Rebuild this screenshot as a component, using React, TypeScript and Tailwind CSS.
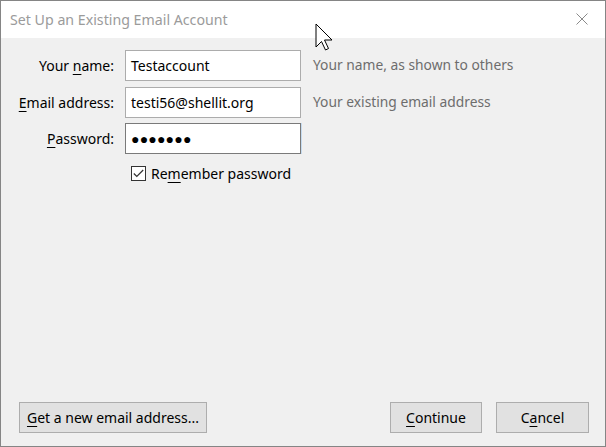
import React from "react"

const font = { fontFamily: '"Noto Sans", "Open Sans", sans-serif' }

function U({ children }: { children: React.ReactNode }) {
  return <span className="underline underline-offset-[3px] decoration-1">{children}</span>
}

interface FieldRowProps {
  label: React.ReactNode
  value: React.ReactNode
  hint?: string
  focused?: boolean
  className?: string
}

function FieldRow({ label, value, hint, focused = false, className = "" }: FieldRowProps) {
  return (
    <div className={`flex items-center h-[31px] ${className}`}>
      <div className="w-[113px] text-right text-[14px] text-black">{label}</div>
      <div
        className={`ml-[11px] w-[176px] h-[31px] flex items-center px-[5px] bg-white border text-[14px] text-black ${
          focused ? "border-[#7a7a7a] shadow-[1px_0_0_#c5dbf0]" : "border-[#acacac]"
        }`}
      >
        {value}
      </div>
      {hint && <div className="ml-[12px] text-[13.8px] text-[#6d6d6d]">{hint}</div>}
    </div>
  )
}

function Button({ children, className = "" }: { children: React.ReactNode; className?: string }) {
  return (
    <div
      className={`h-[31px] flex items-center justify-center bg-[#e1e1e1] border border-[#adadad] text-[14px] text-black ${className}`}
    >
      {children}
    </div>
  )
}

export default function App() {
  return (
    <div style={font} className="relative w-[606px] h-[447px] flex flex-col border border-[#858585] bg-[#f0f0f0] overflow-hidden">
      {/* title bar */}
      <div className="h-[37px] bg-white flex items-center justify-between pl-[9px] pr-[17px]">
        <span className="text-[14.2px] text-[#9b9b9b]">Set Up an Existing Email Account</span>
        <svg width="12" height="12" viewBox="0 0 12 12" className="mb-[1px]">
          <path d="M0.5 0.5 L11.5 11.5 M11.5 0.5 L0.5 11.5" stroke="#8a8a8a" strokeWidth="1" fill="none" />
        </svg>
      </div>

      {/* form */}
      <div className="flex-1 flex flex-col pt-[12px]">
        <FieldRow
          label={<>Your <U>n</U>ame:</>}
          value="Testaccount"
          hint="Your name, as shown to others"
        />
        <FieldRow
          className="mt-[6px]"
          label={<><U>E</U>mail address:</>}
          value="testi56@shellit.org"
          hint="Your existing email address"
        />
        <FieldRow
          className="mt-[5px]"
          focused
          label={<><U>P</U>assword:</>}
          value={<span className="text-[14px] tracking-[0.2px] leading-none">●●●●●●●</span>}
        />
        <div className="flex items-center mt-[9px] ml-[130px]">
          <div className="w-[15px] h-[15px] border border-[#333] bg-white flex items-center justify-center">
            <svg width="11" height="9" viewBox="0 0 11 9">
              <path d="M0.8 4.5 L3.8 7.5 L10.2 1" stroke="#333" strokeWidth="1.2" fill="none" />
            </svg>
          </div>
          <span className="ml-[5px] text-[14px] text-black">
            Re<U>m</U>ember password
          </span>
        </div>
      </div>

      {/* footer */}
      <div className="flex items-center justify-between pl-[18px] pr-[16px] pb-[13px]">
        <Button className="w-[188px]">
          <span><U>G</U>et a new email address...</span>
        </Button>
        <div className="flex gap-[14px]">
          <Button className="w-[92px]">
            <span><U>C</U>ontinue</span>
          </Button>
          <Button className="w-[93px]">
            <span>C<U>a</U>ncel</span>
          </Button>
        </div>
      </div>

      {/* mouse pointer */}
      <svg
        width="19"
        height="28"
        viewBox="0 0 19 28"
        className="absolute left-[314px] top-[22px] pointer-events-none"
      >
        <path
          d="M1 1 L1 24 L6.5 18.5 L10.5 27 L13.5 25.5 L9.5 17 L17 17 Z"
          fill="white"
          stroke="black"
          strokeWidth="1"
          strokeLinejoin="miter"
        />
      </svg>
    </div>
  )
}
